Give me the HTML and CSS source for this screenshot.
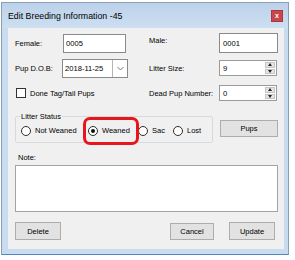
FILE: index.html
```html
<!DOCTYPE html>
<html>
<head>
<meta charset="utf-8">
<link rel="stylesheet" href="styles.css">
</head>
<body>
<div class="window">
  <div class="titlebar">
    <span class="title">Edit Breeding Information -45</span>
    <span class="close">x</span>
  </div>
  <div class="frame">
    <div class="client">
      <div class="fields">
        <span class="lbl">Female:</span>
        <div class="input female">0005</div>
        <span class="lbl lbl-top">Male:</span>
        <div class="input male">0001</div>

        <span class="lbl">Pup D.O.B:</span>
        <div class="input date"><span class="date-text">2018-11-25</span><span class="drop"><svg width="7" height="5" viewBox="0 0 7 5"><path d="M0.5 1 L3.5 4 L6.5 1" fill="none" stroke="#7a7a7a" stroke-width="1"/></svg></span></div>
        <span class="lbl">Litter Size:</span>
        <div class="input spin"><span class="spin-val">9</span><span class="spin-btns"><span class="up"></span><span class="down"></span></span></div>

        <div class="check"><span class="box"></span><span class="lbl">Done Tag/Tail Pups</span></div>
        <span class="lbl">Dead Pup Number:</span>
        <div class="input spin"><span class="spin-val">0</span><span class="spin-btns"><span class="up"></span><span class="down"></span></span></div>
      </div>

      <div class="status-row">
        <fieldset class="group">
          <legend class="lbl">Litter Status</legend>
          <div class="radios">
            <span class="radio r1"><span class="dot"></span><span class="lbl">Not Weaned</span></span>
            <span class="radio r2 ring"><span class="dot on"></span><span class="lbl">Weaned</span></span>
            <span class="radio r3"><span class="dot"></span><span class="lbl">Sac</span></span>
            <span class="radio r4"><span class="dot"></span><span class="lbl">Lost</span></span>
          </div>
        </fieldset>
        <span class="btn pups">Pups</span>
      </div>

      <div class="note-label lbl">Note:</div>
      <div class="note"></div>

      <div class="actions">
        <span class="btn delete">Delete</span>
        <span class="spacer"></span>
        <span class="btn cancel">Cancel</span>
        <span class="btn update">Update</span>
      </div>
    </div>
  </div>
</div>
</body>
</html>
```

FILE: styles.css
```css
* { box-sizing: border-box; }
html, body { margin: 0; padding: 0; background: #ffffff; }
body {
  padding: 2px 0 0 1px;
  font-family: "Liberation Sans", Arial, sans-serif;
  color: #000;
}
.window {
  width: 288px;
  border: 1px solid #8a9db3;
  border-bottom-color: #4f86c0;
  background: #c6d9ed;
}
.titlebar {
  height: 25px;
  display: flex;
  align-items: center;
  justify-content: space-between;
  padding: 0 5px 0 6px;
  background: linear-gradient(#bcd2ea, #cddff1);
}
.title {
  font-size: 8.8px;
  color: #000;
}
.close {
  width: 12px;
  height: 12px;
  background: #c9474a;
  border: 1px solid #a8383b;
  color: #fff;
  font-size: 7px;
  font-weight: bold;
  line-height: 9px;
  text-align: center;
}
.frame {
  padding: 0 4px 5px 6px;
  background: #c9dcef;
}
.client {
  width: 276px;
  height: 221px;
  background: #f0f0f0;
  padding: 5px 6px 0 7px;
}
.lbl {
  font-size: 7.5px;
  line-height: 9px;
  color: #000;
  white-space: nowrap;
}
.fields {
  display: grid;
  grid-template-columns: 47px 87px 70px 59px;
  grid-template-rows: 20px 20px 20px;
  row-gap: 5px;
  align-items: center;
}
.lbl-top { align-self: start; padding-top: 3px; }
.input {
  background: #fff;
  border: 1px solid #8a8a8a;
  font-size: 7.6px;
  line-height: 9px;
  padding-left: 2px;
  display: flex;
  align-items: center;
}
.female { width: 63px; height: 19px; margin-left: 1px; }
.male { width: 59px; height: 20px; padding-left: 3px; }
.date { width: 66px; height: 19px; padding-left: 2px; }
.date-text { flex: 1; }
.drop {
  width: 15px;
  height: 100%;
  border-left: 1px solid #b5b5b5;
  display: flex;
  align-items: center;
  justify-content: center;
}
.spin {
  width: 58px;
  height: 16px;
  padding-left: 3px;
  border-color: #9a9a9a;
}
.spin-val { flex: 1; }
.spin-btns {
  width: 10px;
  height: 100%;
  margin-right: 1px;
  display: flex;
  flex-direction: column;
  gap: 1px;
  padding: 1px 0;
}
.spin-btns .up, .spin-btns .down {
  flex: 1;
  background: #e4e4e4;
  border: 1px solid #c4c4c4;
  display: flex;
  align-items: center;
  justify-content: center;
}
.spin-btns .up::before {
  content: "";
  border-left: 2.5px solid transparent;
  border-right: 2.5px solid transparent;
  border-bottom: 3px solid #222;
}
.spin-btns .down::before {
  content: "";
  border-left: 2.5px solid transparent;
  border-right: 2.5px solid transparent;
  border-top: 3px solid #222;
}
.check {
  grid-column: 1 / 3;
  display: flex;
  align-items: center;
  gap: 4px;
  padding-left: 1px;
}
.box {
  width: 10px;
  height: 10px;
  border: 1px solid #333;
  background: #fff;
}
.status-row {
  display: flex;
  align-items: flex-start;
  margin-top: 9px;
}
.group {
  width: 198px;
  margin: 0;
  padding: 4px 0 6px 4px;
  border: 1px solid #d5dadf;
  border-radius: 2px;
  min-width: 0;
}
.group legend {
  padding: 0 1px;
  margin-left: 0;
}
.radios {
  display: flex;
  align-items: center;
  height: 11px;
}
.radio {
  display: flex;
  align-items: center;
  gap: 4px;
  height: 11px;
}
.r1 { width: 67px; margin-left: 1px; }
.r2 { width: 50px; }
.r3 { width: 35px; }
.dot {
  width: 10px;
  height: 10px;
  border-radius: 50%;
  border: 1px solid #2e2e2e;
  background: #fff;
  display: flex;
  align-items: center;
  justify-content: center;
}
.dot.on::before {
  content: "";
  width: 4px;
  height: 4px;
  border-radius: 50%;
  background: #111;
}
.ring { position: relative; }
.ring::after {
  content: "";
  position: absolute;
  left: -5px;
  right: -1px;
  top: -8px;
  bottom: -9px;
  border: 3px solid #e8161c;
  border-radius: 7px;
  pointer-events: none;
}
.btn {
  display: flex;
  align-items: center;
  justify-content: center;
  background: #e2e2e2;
  border: 1px solid #adadad;
  font-size: 7.5px;
  line-height: 9px;
  color: #000;
}
.pups {
  width: 58px;
  height: 17px;
  margin-left: 7px;
  margin-top: 8px;
}
.note-label {
  margin-top: 10px;
  padding-left: 3px;
}
.note {
  margin-top: 3px;
  width: 263px;
  height: 47px;
  background: #fff;
  border: 1px solid #a3a3a3;
}
.actions {
  display: flex;
  align-items: flex-start;
  margin-top: 10px;
  padding-right: 3px;
}
.spacer { flex: 1; }
.delete { width: 46px; height: 18px; }
.cancel { width: 44px; height: 17px; margin-top: 1px; }
.update { width: 46px; height: 18px; margin-left: 15px; }
```
